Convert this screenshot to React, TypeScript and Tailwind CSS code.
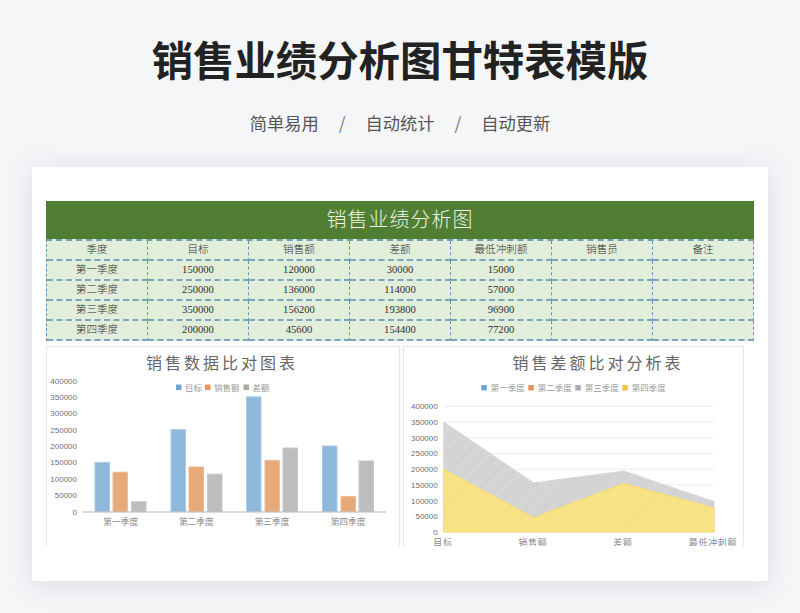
const cjk = '[font-family:"Noto_Sans_CJK_SC",sans-serif]';
const serif = '"Liberation Serif","Noto Sans CJK SC",serif';
const sans = '"Liberation Sans","Noto Sans CJK SC",sans-serif';

const headers = ['季度', '目标', '销售额', '差额', '最低冲刺额', '销售员', '备注'];
const rows = [
  ['第一季度', '150000', '120000', '30000', '15000', '', ''],
  ['第二季度', '250000', '136000', '114000', '57000', '', ''],
  ['第三季度', '350000', '156200', '193800', '96900', '', ''],
  ['第四季度', '200000', '45600', '154400', '77200', '', ''],
];

const yTicks = [0, 50000, 100000, 150000, 200000, 250000, 300000, 350000, 400000];

function Cell({ text }: { text: string }) {
  return (
    <div className="flex h-5 items-center justify-center border-r border-b-2 border-dashed border-r-[#5f94b4] border-b-[#7ba6bd] text-[10.6px] leading-none font-light text-[#2e2e2e] [font-family:'Liberation_Serif','Noto_Sans_CJK_SC',serif]">
      {text}
    </div>
  );
}

function BarChart() {
  const base = 511.5;
  const scale = 131 / 400000;
  const groups = [
    { x: [95, 113, 131.5], label: '第一季度', cx: 120.7, vals: [150000, 120000, 30000] },
    { x: [171, 189, 207.5], label: '第二季度', cx: 196.3, vals: [250000, 136000, 114000] },
    { x: [246.5, 265, 283], label: '第三季度', cx: 272, vals: [350000, 156200, 193800] },
    { x: [322.5, 341, 359], label: '第四季度', cx: 348, vals: [200000, 45600, 154400] },
  ];
  const fills = ['#8fb9dc', '#e6a977', '#bdbdbd'];
  const strokes = ['#a9cbe6', '#eebd95', '#c9c9c9'];
  return (
    <svg width="353" height="199" className="block">
      <g transform="translate(-47 -347)">
        <text x="222" y="369" textAnchor="middle" fontSize="16" letterSpacing="3" fill="#666666" fontFamily={serif}>销售数据比对图表</text>
        {yTicks.map((t) => (
          <text key={t} x="77" y={base - t * scale + 3} textAnchor="end" fontSize="8" fill="#6f6f6f" fontFamily={sans}>{t}</text>
        ))}
        <rect x="176" y="384.5" width="5.5" height="5.5" fill="#6fa3d2" />
        <text x="185" y="390.5" fontSize="8.5" fill="#9a9a9a" fontFamily={serif}>目标</text>
        <rect x="205" y="384.5" width="5.5" height="5.5" fill="#e8935a" />
        <text x="214" y="390.5" fontSize="8.5" fill="#9a9a9a" fontFamily={serif}>销售额</text>
        <rect x="243.5" y="384.5" width="5.5" height="5.5" fill="#ababab" />
        <text x="252.5" y="390.5" fontSize="8.5" fill="#9a9a9a" fontFamily={serif}>差额</text>
        {groups.map((g) => (
          <g key={g.label}>
            {g.vals.map((v, i) => (
              <rect
                key={i}
                x={g.x[i]}
                y={base - v * scale}
                width="14.5"
                height={v * scale}
                fill={fills[i]}
                stroke={strokes[i]}
                strokeWidth="1"
              />
            ))}
            <text x={g.cx} y="525" textAnchor="middle" fontSize="8.7" fill="#8a8a8a" fontFamily={serif}>{g.label}</text>
          </g>
        ))}
        <line x1="82.5" x2="386" y1={base + 0.5} y2={base + 0.5} stroke="#b5b5b5" strokeWidth="1" />
      </g>
    </svg>
  );
}

function AreaChart() {
  const base = 532;
  const scale = 125.7 / 400000;
  const xs = [443.7, 533.7, 623.8, 714];
  const grey = [350000, 156200, 193800, 96900];
  const yellow = [200000, 45600, 154400, 77200];
  const area = (vals: number[]) =>
    `${xs[0]},${base} ` + vals.map((v, i) => `${xs[i]},${base - v * scale}`).join(' ') + ` ${xs[3]},${base}`;
  const legend = [
    { x: 481.3, c: '#6fa3d2', t: '第一季度' },
    { x: 528.3, c: '#e8935a', t: '第二季度' },
    { x: 575.3, c: '#ababab', t: '第三季度' },
    { x: 622.3, c: '#f3c63c', t: '第四季度' },
  ];
  const cats = [
    { x: 443, t: '目标' },
    { x: 533, t: '销售额' },
    { x: 623, t: '差额' },
    { x: 713, t: '最低冲刺额' },
  ];
  return (
    <svg width="339" height="199" className="block">
      <defs>
        <pattern id="hatchGrey" width="2" height="2" patternUnits="userSpaceOnUse" patternTransform="rotate(45)">
          <rect width="2" height="2" fill="#e4e4e4" />
          <rect width="0.8" height="2" fill="#bcbcbc" />
        </pattern>
        <pattern id="hatchYellow" width="2" height="2" patternUnits="userSpaceOnUse" patternTransform="rotate(45)">
          <rect width="2" height="2" fill="#fcea9f" />
          <rect width="0.8" height="2" fill="#f4d85f" />
        </pattern>
      </defs>
      <g transform="translate(-404 -347)">
        <text x="598" y="369" textAnchor="middle" fontSize="16" letterSpacing="3" fill="#666666" fontFamily={serif}>销售差额比对分析表</text>
        {legend.map((l) => (
          <g key={l.t}>
            <rect x={l.x} y="385" width="5.5" height="5.5" fill={l.c} />
            <text x={l.x + 9.4} y="391" fontSize="8.5" fill="#9a9a9a" fontFamily={serif}>{l.t}</text>
          </g>
        ))}
        {yTicks.map((t) => (
          <g key={t}>
            {t > 0 && <line x1="444" x2="714" y1={base - t * scale} y2={base - t * scale} stroke="#ececec" strokeWidth="1" />}
            <text x="437.7" y={base - t * scale + 3} textAnchor="end" fontSize="8" fill="#6f6f6f" fontFamily={sans}>{t}</text>
          </g>
        ))}
        <polygon points={area(grey)} fill="url(#hatchGrey)" stroke="#d8d8d8" strokeWidth="1" />
        <polygon points={area(yellow)} fill="url(#hatchYellow)" stroke="#f8dc70" strokeWidth="1" />
        {cats.map((c) => (
          <text key={c.t} x={c.x} y="546" textAnchor="middle" fontSize="9" letterSpacing="0.7" fill="#8a8a8a" fontFamily={serif}>{c.t}</text>
        ))}
      </g>
    </svg>
  );
}

export default function App() {
  return (
    <div className={`flex h-[613px] w-[800px] flex-col items-center overflow-hidden bg-[#f5f6f8] ${cjk}`}>
      <h1 className="mt-[33px] h-[50px] text-[41.4px] leading-[50px] font-bold whitespace-nowrap text-[#222222]">
        销售业绩分析图甘特表模版
      </h1>
      <div className="mt-[28px] flex h-6 items-center gap-[20px] text-[17.25px] leading-6 text-[#555555]">
        <span>简单易用</span>
        <span className="text-[#777777]">/</span>
        <span>自动统计</span>
        <span className="text-[#777777]">/</span>
        <span>自动更新</span>
      </div>
      <div className="mt-[32px] h-[414px] w-[736px] bg-white pt-[34px] pl-[14px] shadow-[0_4px_24px_rgba(120,130,150,0.22)]">
        <div className="w-[708px]">
          <div className="flex h-[38px] items-center justify-center bg-[#507e32] text-[20px] font-light tracking-[1px] text-[#eef5e8] [font-family:'Liberation_Serif','Noto_Sans_CJK_SC',serif]">
            销售业绩分析图
          </div>
          <div className="grid grid-cols-7 border-t-2 border-l border-dashed border-t-[#6f9fb0] border-l-[#5f94b4] bg-[#e1eeda]">
            {headers.map((h) => (
              <Cell key={h} text={h} />
            ))}
            {rows.map((r) => r.map((c, i) => <Cell key={r[0] + i} text={c} />))}
          </div>
        </div>
        <div className="mt-[5px] flex items-start">
          <div className="h-[200px] w-[354px] overflow-hidden border-x border-t border-[#e6e6e6]">
            <BarChart />
          </div>
          <div className="ml-[3px] h-[200px] w-[341px] overflow-hidden border-x border-t border-[#e6e6e6]">
            <AreaChart />
          </div>
        </div>
      </div>
    </div>
  );
}
